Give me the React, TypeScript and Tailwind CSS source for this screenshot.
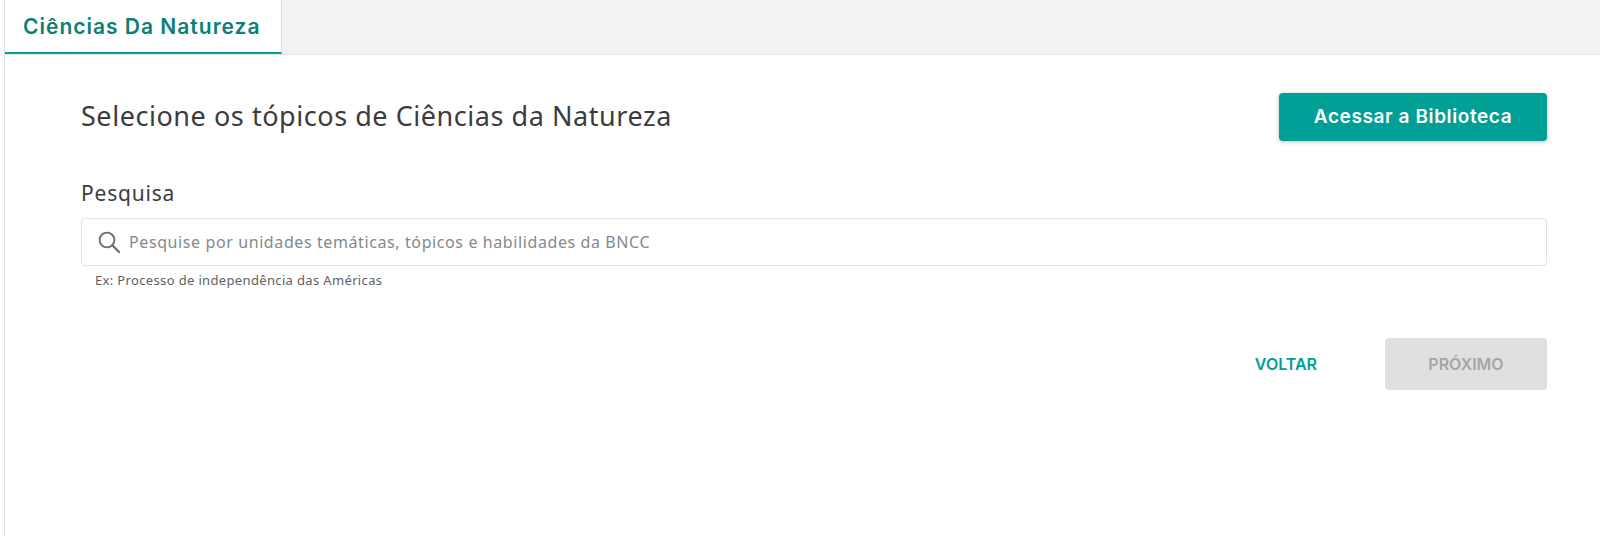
const body = { fontFamily: '"Noto Sans", "Lato", sans-serif' };
const heading = { fontFamily: '"Inter", "Roboto", sans-serif' };

function IconSearch() {
  return (
    <svg width="24" height="24" viewBox="0 0 24 24" fill="none" aria-hidden className="text-[#6f6f6f]">
      <circle cx="10" cy="10" r="7.4" stroke="currentColor" strokeWidth="1.9" />
      <path d="M15.4 15.4L22 22" stroke="currentColor" strokeWidth="2.2" strokeLinecap="round" />
    </svg>
  );
}

export default function App() {
  return (
    <div className="h-[536px] w-[1600px] overflow-hidden bg-white pl-1" style={body}>
      <div className="h-full border-l border-[#e0e0e0]">
        <div className="flex h-[55px] items-start border-b border-[#e3e5e5] bg-[#f1f3f3]">
          <div
            className="flex h-[54px] w-[277px] items-center border-r border-b-2 border-r-[#dcdcdc] border-b-[#00a096] bg-white pt-[2px] pl-[18px] text-[21px] font-semibold tracking-[1px] text-[#0b8074]"
            style={heading}
          >
            Ciências Da Natureza
          </div>
        </div>

        <div className="pr-[53px] pl-[76px]">
          <div className="flex items-center justify-between pt-[38px]">
            <h1 className="-mt-[2px] text-[27px] leading-[48px] tracking-[0.55px] text-[#3c3c3c]">
              Selecione os tópicos de Ciências da Natureza
            </h1>
            <button
              className="h-[48px] w-[268px] rounded-[4px] bg-[#00a096] text-[19px] font-semibold tracking-[0.6px] text-white shadow-[0_1px_4px_rgba(0,0,0,0.25)]"
              style={heading}
            >
              Acessar a Biblioteca
            </button>
          </div>

          <label className="mt-[39px] block text-[21px] leading-[26px] tracking-[0.8px] text-[#3c3c3c]">Pesquisa</label>

          <div className="mt-[12px] flex h-[48px] items-center rounded-[4px] border border-[#e2e4e4] pl-[15px]">
            <IconSearch />
            <span className="ml-[8px] text-[16px] tracking-[0.6px] text-[#85898b]">
              Pesquise por unidades temáticas, tópicos e habilidades da BNCC
            </span>
          </div>

          <p className="mt-[6px] pl-[14px] text-[13px] leading-[16px] tracking-[0.35px] text-[#5f5f5f]">
            Ex: Processo de independência das Américas
          </p>

          <div className="mt-[50px] flex items-center justify-end" style={heading}>
            <button className="mr-[68px] text-[16px] font-semibold text-[#00a096]">VOLTAR</button>
            <button className="h-[52px] w-[162px] rounded-[4px] bg-[#e0e0e0] text-[16px] font-semibold text-[#a6a6a6]">
              PRÓXIMO
            </button>
          </div>
        </div>
      </div>
    </div>
  );
}
